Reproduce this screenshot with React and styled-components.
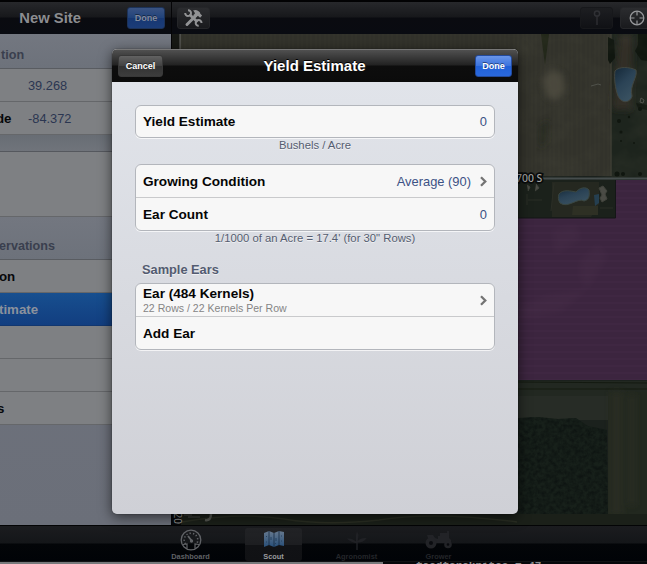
import React from 'react';
import styled, { createGlobalStyle, css } from 'styled-components';

const Global = createGlobalStyle`
  * { box-sizing: border-box; }
  body { margin: 0; background: #000; font-family: "Liberation Sans", Arial, sans-serif; overflow: hidden; }
`;

const Screen = styled.div`
  position: relative;
  width: 647px;
  height: 564px;
  overflow: hidden;
  display: flex;
  flex-direction: column;
  background: #020306;
`;

const Panes = styled.div`
  display: flex;
  height: 525px;
`;

const Sidebar = styled.aside`
  width: 172px;
  height: 525px;
  display: flex;
  flex-direction: column;
  border-right: 1px solid #050507;
  background: linear-gradient(#707580, #6b6f79);
  overflow: hidden;
`;

const MapPane = styled.section`
  width: 475px;
  display: flex;
  flex-direction: column;
`;

const Bar = styled.header`
  flex: none;
  height: 34px;
  display: flex;
  align-items: center;
  border-top: 2px solid #020203;
  background: linear-gradient(#27282b 0, #17181b 15px, #0a0b10 16px, #090b11 100%);
`;

const SideBar = styled(Bar)`
  justify-content: flex-end;
  gap: 46px;
  padding: 0 6px 0 0;
`;

const MapBar = styled(Bar)`
  padding: 0 0 0 5px;
`;

const SideTitle = styled.h2`
  margin: 0;
  font-size: 14.8px;
  line-height: 20px;
  color: #8c8d90;
  white-space: nowrap;
`;

const Button = styled.button`
  font: bold 9px/20px "Liberation Sans", Arial, sans-serif;
  width: ${(p) => p.$w}px;
  height: 22px;
  padding: 0;
  border-radius: 3px;
  border: 1px solid #1b1b1c;
  color: #fff;
  text-shadow: 0 -1px 0 rgba(0, 0, 0, 0.45);
  ${(p) => p.$kind === 'done' && css`
    border-color: #234a9c;
    background: linear-gradient(#6a95e8, #3c74de 48%, #2161d8 52%, #2a68dc);
  `}
  ${(p) => p.$kind === 'plain' && css`
    border-color: #383838;
    background: linear-gradient(#626262, #434343 48%, #333 52%, #3d3d3d);
  `}
  ${(p) => p.$kind === 'dimmed' && css`
    color: #838b9d;
    border-color: #1c3258;
    background: linear-gradient(#3a5382, #21437b 48%, #173873 52%, #1b3c78);
  `}
`;

const ToolButton = styled.div`
  width: 33px;
  height: 22px;
  flex: none;
  display: flex;
  align-items: center;
  justify-content: center;
  border: 1px solid ${(p) => (p.$faint ? '#17181b' : '#252629')};
  border-radius: 3px;
  background: ${(p) => (p.$faint ? 'linear-gradient(#1d1e21, #101115)' : 'linear-gradient(#2b2c2f, #191a1d)')};
  margin-left: ${(p) => p.$gap || 0}px;
`;

const Heading = styled.div`
  height: ${(p) => p.$h}px;
  flex: none;
  display: flex;
  align-items: flex-end;
  padding-bottom: ${(p) => p.$pb}px;
  font-size: 12.6px;
  line-height: 15px;
  font-weight: bold;
  color: #3a3f4e;
  background: linear-gradient(#737780, #6d727b);
  border-bottom: 1px solid #595c61;
  white-space: nowrap;
`;

const SideRow = styled.div`
  height: ${(p) => p.$h || 33}px;
  flex: none;
  display: flex;
  align-items: center;
  border-bottom: 1px solid #65676a;
  background: #7e8083;
  font-weight: bold;
  font-size: 13.3px;
  color: #07080a;
  ${(p) => p.$selected && css`
    background: linear-gradient(#174f8f, #123e80);
    border-color: #12376f;
    color: #8b929d;
  `}
`;

const SideLabel = styled.span`
  width: ${(p) => p.$w || 'auto'};
  margin-left: ${(p) => p.$shift || 0}px;
  white-space: nowrap;
`;

const SideValue = styled.span`
  margin-left: ${(p) => p.$gap}px;
  font-weight: normal;
  font-size: 12.8px;
  color: #2b3651;
`;

const Gap = styled.div`
  flex: none;
  height: 17px;
  background: linear-gradient(#686d74, #70747b);
  border-bottom: 1px solid #55585e;
`;

const MapSvg = styled.svg`
  display: block;
  width: 475px;
  height: 491px;
`;

const TabBar = styled.nav`
  height: 36px;
  flex: none;
  display: flex;
  padding-left: 162px;
  border-top: 1px solid #030405;
  background: linear-gradient(#1b1c1f 0, #141619 17px, #030508 18px, #010307 100%);
`;

const Tab = styled.div`
  width: 57px;
  height: 33px;
  margin: 2px 13px 0 0;
  margin-right: ${(p) => p.$after}px;
  border-radius: 3px;
  display: flex;
  flex-direction: column;
  align-items: center;
  justify-content: space-between;
  padding-top: 1px;
  background: ${(p) => (p.$active ? 'linear-gradient(#222326, #1d1e21 50%, #111215 53%, #101114)' : 'none')};
  color: ${(p) => p.$color};
  font-size: 7.4px;
  line-height: 8px;
  font-weight: bold;
`;

const TabText = styled.span`
  white-space: nowrap;
`;

const Footer = styled.div`
  height: 3px;
  display: flex;
  background: #06070a;
  border-top: 1px solid #111214;
`;

const FooterLight = styled.div`
  width: 383px;
  height: 2px;
  flex: none;
  background: #77797b;
`;

const FooterText = styled.div`
  height: 2px;
  padding-left: 33px;
  overflow: hidden;
  font: bold 11px/9px "Liberation Mono", monospace;
  color: #8b8d90;
  white-space: pre;
`;

const Modal = styled.div`
  position: absolute;
  left: 112px;
  top: 49px;
  width: 406px;
  height: 465px;
  border-radius: 5px;
  overflow: hidden;
  background: linear-gradient(#e1e4ea 33px, #cfd0d6);
  box-shadow: 0 3px 13px rgba(0, 0, 0, 0.6), 0 0 1px #111;
  display: flex;
  flex-direction: column;
`;

const ModalBar = styled.header`
  height: 33px;
  flex: none;
  display: flex;
  align-items: center;
  padding: 0 6px;
  border-top: 1px solid #777;
  background: linear-gradient(#505050, #222 15px, #0d0d0d 16px, #0b0b0b);
`;

const ModalTitle = styled.h1`
  flex: 1;
  margin: 0 9px 0 0;
  text-align: center;
  font-size: 15px;
  line-height: 20px;
  color: #fff;
  text-shadow: 0 -1px 0 #000;
`;

const Content = styled.div`
  display: flex;
  flex-direction: column;
  padding: 23px 23px 0;
`;

const Group = styled.div`
  border: 1px solid #b3b6bc;
  border-radius: 6px;
  background: #f7f7f7;
  box-shadow: 0 1px 0 rgba(255, 255, 255, 0.7);
  overflow: hidden;
`;

const Row = styled.div`
  height: ${(p) => p.$h || 33}px;
  display: flex;
  align-items: center;
  justify-content: space-between;
  padding: 0 7px;
  font-size: 13.6px;
  line-height: 15px;
  font-weight: bold;
  color: #050505;
  & + & { border-top: 1px solid #c9cacc; }
`;

const Value = styled.span`
  display: flex;
  align-items: center;
  gap: 9px;
  font-weight: normal;
  font-size: 12.9px;
  color: #3c5285;
`;

const Stack = styled.div`
  display: flex;
  flex-direction: column;
  padding-top: 1px;
`;

const Detail = styled.span`
  font-size: 10.55px;
  line-height: 14px;
  font-weight: normal;
  color: #858585;
`;

const Note = styled.div`
  height: ${(p) => p.$h}px;
  text-align: center;
  font-size: 11.3px;
  line-height: 15px;
  color: #555d70;
  text-shadow: 0 1px 0 rgba(255, 255, 255, 0.6);
`;

const Section = styled.div`
  height: 21px;
  padding-left: 7px;
  font-size: 12.8px;
  line-height: 15px;
  font-weight: bold;
  color: #535b70;
  text-shadow: 0 1px 0 rgba(255, 255, 255, 0.6);
`;

const Chevron = () => (
  <svg width="7" height="11" viewBox="0 0 7 11">
    <path d="M1 1.200l4.300 4.300L1 9.800" fill="none" stroke="#747474" strokeWidth="2.300" />
  </svg>
);

const ToolsIcon = () => (
  <svg width="19" height="18" viewBox="0 0 19 18" fill="none" stroke="#929395">
    <path d="M5.500 5.500l8 7.500" strokeWidth="2.800" />
    <path d="M4 1.200A2.900 2.900 0 1 1 1.200 4M14.700 16.800A2.900 2.900 0 1 1 17.500 14" strokeWidth="2" />
    <path d="M3 15.500L11.500 7" strokeWidth="3" strokeLinecap="round" />
    <path d="M9 1.500c3-1.300 5-.2 7 2l.3 1.300 1.800 1.700-2 2.300-2-1.700-.8.200-1.600 1.500-2.600-2.500 1.800-1.600c-.2-1.300-.7-2-1.900-3.200z" fill="#929395" stroke="none" />
  </svg>
);

const PinIcon = () => (
  <svg width="10" height="16" viewBox="0 0 10 16" fill="none" stroke="#303135">
    <circle cx="5" cy="3.500" r="2.600" strokeWidth="1.500" />
    <path d="M5 6v9" strokeWidth="1.300" />
  </svg>
);

const TargetIcon = () => (
  <svg width="16" height="16" viewBox="0 0 16 16" fill="none" stroke="#96979a">
    <circle cx="8" cy="8" r="6.800" strokeWidth="1.300" />
    <path d="M8 1v4.500M8 10.500v4.500M1 8h4.500M10.500 8h4.500" strokeWidth="1.200" />
  </svg>
);

const GaugeIcon = () => (
  <svg width="22" height="22" viewBox="0 0 22 22" fill="none" stroke="#616367">
    <circle cx="11" cy="11" r="9.800" strokeWidth="1.300" />
    <path d="M5.500 15A6.800 6.800 0 1 1 16.500 15" strokeWidth="1.600" strokeDasharray="1.300 2" />
    <path d="M8 7l3.500 4.500" strokeWidth="1.800" />
    <circle cx="11.500" cy="12" r="1.700" fill="#616367" stroke="none" />
    <path d="M3 15.500l4-.5v4.500M19 15.500l-4-.5v4.500" strokeWidth="1.200" />
  </svg>
);

const MapIcon = () => (
  <svg width="22" height="20" viewBox="0 0 22 20">
    <defs>
      <linearGradient id="mapBlue" x2="0" y2="1">
        <stop offset="0" stopColor="#66798e" />
        <stop offset="1" stopColor="#284f79" />
      </linearGradient>
    </defs>
    <path d="M1 4l5-2 5 2 5-2 5 1v14l-5-1-5 2-5-2-5 2z" fill="url(#mapBlue)" />
    <path d="M6 2v14M11 4v14M16 2v14" stroke="#182c42" strokeWidth=".8" />
    <path d="M3 8l1-1M3 13h1M8 8v3M13 9v3M13 14l-1 1M18 7h1M18 12h1" stroke="#24415f" fill="none" />
  </svg>
);

const PlantIcon = () => (
  <svg width="22" height="22" viewBox="0 0 22 22">
    <path d="M10.300 21V14C8 14 3 12 1 9.500c4-.5 7 1 9 3V6L11 2l1.500 4-.8 6c2-2.500 5-3.500 9-3-2 3-5 4.500-9 4.500V21z" fill="#202125" />
  </svg>
);

const TractorIcon = () => (
  <svg width="28" height="20" viewBox="0 0 28 20">
    <path d="M2 6h6l2 3 3 1V7h2V4h7V2h2v7l2 2v3H9L3 9z" fill="#222327" />
    <circle cx="6" cy="14" r="5.500" fill="#222327" />
    <circle cx="6" cy="14" r="2" fill="#0b0c10" />
    <circle cx="23" cy="15.500" r="3.800" fill="#222327" />
    <circle cx="23" cy="15.500" r="1.300" fill="#08090d" />
  </svg>
);

const Aerial = () => (
  <MapSvg viewBox="172 34 475 491">
    <defs>
      <filter id="soil" x="0" y="0" width="100%" height="100%" colorInterpolationFilters="sRGB">
        <feTurbulence type="fractalNoise" baseFrequency=".035 .045" numOctaves="4" seed="4" />
        <feColorMatrix values="0 0 0 0 .3  0 0 0 0 .3  0 0 0 0 .25  1.300 0 0 0 -.5" />
      </filter>
      <filter id="trees" x="0" y="0" width="100%" height="100%" colorInterpolationFilters="sRGB">
        <feTurbulence type="fractalNoise" baseFrequency=".24" numOctaves="3" seed="8" />
        <feColorMatrix values="0 0 0 0 .055  0 0 0 0 .08  0 0 0 0 .07  2 0 0 0 -.6" />
      </filter>
      <filter id="soft" x="-30%" y="-30%" width="160%" height="160%"><feGaussianBlur stdDeviation="3" /></filter>
      <pattern id="furrows" width="9" height="20" patternUnits="userSpaceOnUse">
        <path d="M1 0v20M5 0v20" stroke="#74705c" strokeOpacity=".07" />
      </pattern>
      <pattern id="lines" width="20" height="7" patternUnits="userSpaceOnUse">
        <path d="M0 2h20" stroke="#785078" strokeOpacity=".1" />
      </pattern>
      <linearGradient id="pond" x2=".6" y2="1">
        <stop offset="0" stopColor="#142838" />
        <stop offset=".5" stopColor="#2b4356" />
        <stop offset="1" stopColor="#3a5261" />
      </linearGradient>
      <clipPath id="wood"><path d="M518 418l20-1 20 2 18-1 12 8 19 4 1 88h-90z" /></clipPath>
    </defs>
    <path d="M172 34h475v491H172z" fill="#1b211d" />
    <path d="M180 34h431v142H180z" fill="#32322b" />
    <path d="M180 34h431v142H180z" fill="url(#furrows)" />
    <path d="M172 34h8v20h-8z" fill="#171915" />
    <path d="M180 34v18" stroke="#6a6b68" />
    <path d="M541 34h8l-4 31z" fill="#222719" />
    <path d="M542 79l10-10 11 6 2 16-9 10-9-4z" fill="#5a564a" opacity=".6" filter="url(#soft)" />
    <path d="M539 126l10-6-2 22-8 7z" fill="#24281f" opacity=".6" filter="url(#soft)" />
    <path d="M611 34h36v144h-36z" fill="#1d241d" />
    <path d="M619 34h14l-2 76-19-1z" fill="#302f28" filter="url(#soft)" />
    <path d="M611 34v142" stroke="#3c3d33" strokeWidth="1.500" />
    <path d="M608 37l6 3 1 18-5 6-2-4zM638 34h9v27l-6-1-6-9 3-6zM636 103l11 2v5l-9-2z" fill="#10160f" />
    <path d="M500 34h147v345H500z" filter="url(#soil)" opacity=".35" />
    <path d="M615 71c4-5 15-4 21-1 2 7-7 16-4 26-1 6-10 9-14 0-3-8-4-18-3-25z" fill="url(#pond)" stroke="#414640" />
    <path d="M641 98l3 2-1 3-3-1zM591 86l7-2 3 1" stroke="#50524b" fill="none" />
    <g fill="#10160f">
      <circle cx="619" cy="121" r="2" /><circle cx="629" cy="117" r="1.200" /><circle cx="640" cy="109" r="2" />
      <circle cx="621" cy="132" r="1.500" /><circle cx="634" cy="143" r="1" /><circle cx="621" cy="141" r="1" />
      <circle cx="617" cy="174" r="2.500" /><circle cx="623" cy="174" r="2" /><circle cx="640" cy="174" r="2" />
    </g>
    <path d="M518 180h98v38h-98z" fill="#1b211b" />
    <path d="M552 182h47v22l-8 13h-39z" fill="#292c22" opacity=".7" />
    <path d="M559 194c4-5 12-3 17-2 3-4 10-6 13-2 1 6 0 10-5 11-6-4-16 8-24 2-2-3-2-6-1-9z" fill="url(#pond)" stroke="#3a4640" />
    <path d="M573 206h25v9h-26z" fill="#2e3024" />
    <path d="M594 195l5-1v9l-4 3z" fill="#253f50" />
    <path d="M599 188l4-2 4 5-2 3 2 5-5 3-2-4 2-3zM527 185l3 2-2 4M536 184l3 4-4 3" fill="#4a4b45" stroke="#41433c" />
    <path d="M527 194v11M528 200h14M554 183l-3 28M600 208h13" stroke="#2b2e26" />
    <path d="M518 218h98v-38h31v200H518z" fill="#3c253f" />
    <path d="M518 218h98v-38h31v200H518z" fill="url(#lines)" />
    <path d="M552 230l24-6 5 15-26 16zM520 306l28-11 40-6-27 23-42 8zM580 260l18-16 10 12-20 33-9-12z" fill="#64445f" opacity=".1" filter="url(#soft)" />
    <path d="M615.500 180v38H518" fill="none" stroke="#141617" />
    <path d="M518 178.500h129" stroke="#454c4c" strokeWidth="2" />
    <text x="516" y="181.500" fill="#a0a1a0" stroke="#090b0b" strokeWidth="3.500" paintOrder="stroke" fontFamily="Noto Sans, sans-serif" fontSize="10.400" fontWeight="500">700 S</text>
    <path d="M518 381h129v15H518z" fill="#222821" />
    <path d="M518 382l129 1M518 389h129" stroke="#141a11" />
    <path d="M518 396h90v24h-90z" fill="#272c26" />
    <path d="M608 392h39v123h-39z" fill="#22281f" />
    <path d="M611 392h11v123h-11zM629 395h6v110h-6z" fill="#303127" opacity=".5" filter="url(#soft)" />
    <path d="M518 418l20-1 20 2 18-1 12 8 19 4 1 88h-90z" fill="#17201a" />
    <g clipPath="url(#wood)"><path d="M518 417h90v101h-90z" filter="url(#trees)" /></g>
    <path d="M172 514h475v11H172z" fill="#1b2019" />
    <path d="M182 522q60-10 102-3t95 1q55-9 138 2" fill="none" stroke="#2a2e23" strokeWidth="1.500" />
    <path d="M188 517h12M184 515h8" stroke="#3b3d38" strokeWidth="1.500" />
    <path d="M205 520q6 1 6-6" fill="none" stroke="#565852" strokeWidth="2.500" />
    <path d="M172 514h9v11h-9z" fill="#08090a" />
    <text transform="translate(173.500 512.500) rotate(90)" fill="#929493" fontFamily="Noto Sans, sans-serif" fontSize="10">20</text>
  </MapSvg>
);

export default function App() {
  return (
    <>
      <Global />
      <Screen>
        <Panes>
          <Sidebar>
            <SideBar>
              <SideTitle>New Site</SideTitle>
              <Button $w={38} $kind="dimmed">Done</Button>
            </SideBar>
            <Heading $h={35} $pb={5}><SideLabel $shift={1}>tion</SideLabel></Heading>
            <SideRow><SideLabel $w="11px" /><SideValue $gap={17}>39.268</SideValue></SideRow>
            <SideRow><SideLabel $w="15px" $shift={-4}>de</SideLabel><SideValue $gap={17}>-84.372</SideValue></SideRow>
            <Gap />
            <SideRow $h={65} />
            <Heading $h={43} $pb={5}><SideLabel $shift={-1}>ervations</SideLabel></Heading>
            <SideRow><SideLabel $shift={-1}>on</SideLabel></SideRow>
            <SideRow $selected><SideLabel $shift={-1}>timate</SideLabel></SideRow>
            <SideRow />
            <SideRow />
            <SideRow><SideLabel $shift={-3}>s</SideLabel></SideRow>
          </Sidebar>
          <MapPane>
            <MapBar>
              <ToolButton><ToolsIcon /></ToolButton>
              <ToolButton $faint $gap={370}><PinIcon /></ToolButton>
              <ToolButton $gap={7}><TargetIcon /></ToolButton>
            </MapBar>
            <Aerial />
          </MapPane>
        </Panes>
        <TabBar>
          <Tab $color="#5f6165" $after={26}><GaugeIcon /><TabText>Dashboard</TabText></Tab>
          <Tab $color="#999b9e" $active $after={26}><MapIcon /><TabText>Scout</TabText></Tab>
          <Tab $color="#24262a" $after={25}><PlantIcon /><TabText>Agronomist</TabText></Tab>
          <Tab $color="#24262a" $after={0}><TractorIcon /><TabText>Grower</TabText></Tab>
        </TabBar>
        <Footer>
          <FooterLight />
          <FooterText>feedforeknites = 47</FooterText>
        </Footer>
        <Modal>
          <ModalBar>
            <Button $w={45} $kind="plain">Cancel</Button>
            <ModalTitle>Yield Estimate</ModalTitle>
            <Button $w={37} $kind="done">Done</Button>
          </ModalBar>
          <Content>
            <Group><Row $h={31}>Yield Estimate<Value>0</Value></Row></Group>
            <Note $h={26}>Bushels / Acre</Note>
            <Group>
              <Row $h={32}>Growing Condition<Value>Average (90)<Chevron /></Value></Row>
              <Row>Ear Count<Value>0</Value></Row>
            </Group>
            <Note $h={31}>1/1000 of an Acre = 17.4' (for 30" Rows)</Note>
            <Section>Sample Ears</Section>
            <Group>
              <Row $h={32}>
                <Stack>Ear (484 Kernels)<Detail>22 Rows / 22 Kernels Per Row</Detail></Stack>
                <Chevron />
              </Row>
              <Row>Add Ear</Row>
            </Group>
          </Content>
        </Modal>
      </Screen>
    </>
  );
}
